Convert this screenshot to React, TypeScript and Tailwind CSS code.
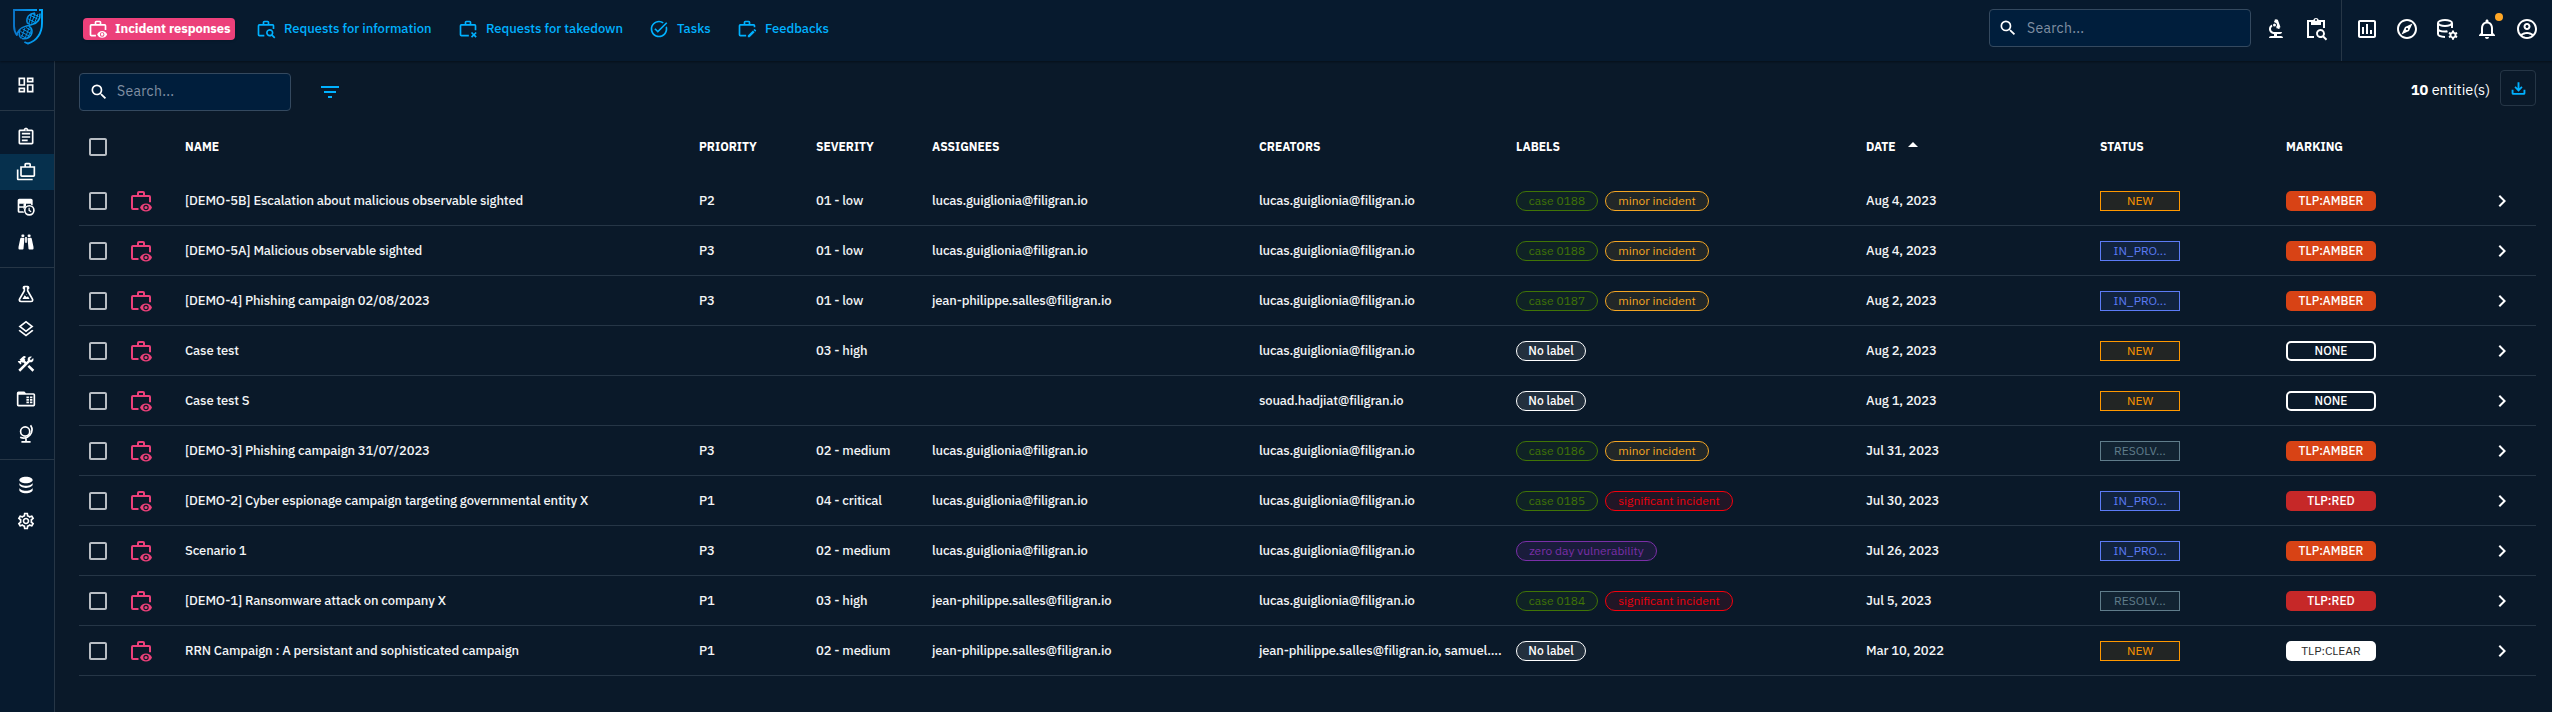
import React from "react";
import { MdOutlineDashboard, MdOutlineAssignment, MdOutlineCases, MdOutlineLayers, MdConstruction, MdOutlineExplore, MdOutlineAccountCircle, MdNotificationsNone, MdOutlineInsertChart, MdTaskAlt, MdSearch, MdFilterList, MdBiotech, MdChevronRight, MdOutlineCheckBoxOutlineBlank, MdArrowDropUp, MdOutlineSettings } from "react-icons/md";

type IP = { className?: string };

const Svg = ({ className = "", children }: { className?: string; children: React.ReactNode }) => (
  <svg viewBox="0 0 24 24" fill="currentColor" className={"shrink-0 " + className}>{children}</svg>
);

const CASE = "M8 6V4a2 2 0 0 1 2-2h4a2 2 0 0 1 2 2v2h4a2 2 0 0 1 2 2v5.200h-2V8H4v11h5.500v2H4a2 2 0 0 1-2-2V8a2 2 0 0 1 2-2h4Zm2 0h4V4h-4v2Z";

const CaseEye = ({ className }: IP) => (
  <Svg className={className}>
    <path d={CASE} />
    <path fillRule="evenodd" d="M17 14.500c-2.700 0-5 1.600-6 4 1 2.400 3.300 4 6 4s5-1.600 6-4c-1-2.400-3.300-4-6-4Zm0 6.700a2.700 2.700 0 1 1 0-5.400 2.700 2.700 0 0 1 0 5.400Zm0-1.100a1.600 1.600 0 1 0 0-3.200 1.600 1.600 0 0 0 0 3.200Z" />
  </Svg>
);
const CaseSearch = ({ className }: IP) => (
  <Svg className={className}>
    <path d="M8 6V4a2 2 0 0 1 2-2h4a2 2 0 0 1 2 2v2h4a2 2 0 0 1 2 2v4h-2V8H4v11h6v2H4a2 2 0 0 1-2-2V8a2 2 0 0 1 2-2h4Zm2 0h4V4h-4v2Z" />
    <path fillRule="evenodd" d="M16.500 12a4.500 4.500 0 1 0 2.300 8.400l3 3 1.400-1.400-3-3A4.500 4.500 0 0 0 16.500 12Zm0 2a2.500 2.500 0 1 1 0 5 2.500 2.500 0 0 1 0-5Z" />
  </Svg>
);
const CaseRemove = ({ className }: IP) => (
  <Svg className={className}>
    <path d="M8 6V4a2 2 0 0 1 2-2h4a2 2 0 0 1 2 2v2h4a2 2 0 0 1 2 2v5.500h-2V8H4v11h9v2H4a2 2 0 0 1-2-2V8a2 2 0 0 1 2-2h4Zm2 0h4V4h-4v2Z" />
    <path d="m21.100 15.500 1.400 1.400-2.100 2.100 2.100 2.100-1.400 1.400-2.100-2.100-2.100 2.100-1.400-1.400 2.100-2.100-2.100-2.100 1.400-1.400 2.100 2.100 2.100-2.100Z" />
  </Svg>
);
const CaseEdit = ({ className }: IP) => (
  <Svg className={className}>
    <path d="M8 6V4a2 2 0 0 1 2-2h4a2 2 0 0 1 2 2v2h4a2 2 0 0 1 2 2v2h-2V8H4v11h7v2H4a2 2 0 0 1-2-2V8a2 2 0 0 1 2-2h4Zm2 0h4V4h-4v2Z" />
    <path d="M13 19.900V22h2.100l6.100-6.100-2.100-2.100-6.100 6.100Zm9.900-6.300-1.400-1.400a.6.6 0 0 0-.8 0l-1 1 2.100 2.100 1-1a.6.6 0 0 0 .1-.7Z" />
  </Svg>
);
const ClipSearch = ({ className }: IP) => (
  <Svg className={className}>
    <path fillRule="evenodd" d="M3 3h6.200a3 3 0 0 1 5.600 0H21v8h-2V5h-2v3H7V5H5v14h5v2H3V3Zm9-1a1 1 0 1 0 0 2 1 1 0 0 0 0-2Z" />
    <path fillRule="evenodd" d="M16.500 12a4.500 4.500 0 1 0 2.300 8.400l3 3 1.400-1.400-3-3A4.500 4.500 0 0 0 16.500 12Zm0 2a2.500 2.500 0 1 1 0 5 2.500 2.500 0 0 1 0-5Z" />
  </Svg>
);
const GEAR = "M17.100 12h1.800l.3 1.500 1 .5 1.400-.6.900 1.600-1.100 1v1l1.100 1-.9 1.600-1.400-.5-1 .6-.3 1.500h-1.800l-.3-1.500-1-.6-1.400.5-.9-1.600 1.100-1v-1l-1.100-1 .9-1.600 1.400.6 1-.5.3-1.500Z";
const DbCog = ({ className }: IP) => (
  <Svg className={className}>
    <g fill="none" stroke="currentColor" strokeWidth="2">
      <ellipse cx="10" cy="6" rx="7" ry="3" />
      <path d="M3 6v11c0 1.500 2.500 2.800 7 3M17 6v5M3 11.500c0 1.700 3 3 7 3 1 0 2 0 2.500-.2" />
    </g>
    <path fillRule="evenodd" transform="translate(0 1.500)" d={GEAR + "M18 15a1.600 1.600 0 1 0 0 3.200 1.600 1.600 0 0 0 0-3.200Z"} />
  </Svg>
);
const TableClock = ({ className }: IP) => (
  <Svg className={className}>
    <path fillRule="evenodd" d="M4 2h14a2 2 0 0 1 2 2v6.300a7 7 0 0 0-2-1V8h-6v3a7 7 0 0 0-2 2H4v4h5a7 7 0 0 0 .7 2H4a2 2 0 0 1-2-2V4a2 2 0 0 1 2-2Zm0 6v3h6V8H4Z" />
    <path d="M9 8h2v4l-2 3z" />
    <path fillRule="evenodd" d="M16 9.500a6.500 6.500 0 1 0 0 13 6.500 6.500 0 0 0 0-13Zm0 2a4.500 4.500 0 1 1 0 9 4.500 4.500 0 0 1 0-9Zm-1 1.500v3.500l2.800 1.700.8-1.200-2.100-1.300V13H15Z" />
  </Svg>
);
const Binoculars = ({ className }: IP) => (
  <Svg className={className}>
    <path d="M11 6h2v7h-2zM9 20c0 .6-.4 1-1 1H4c-.6 0-1-.4-1-1v-2l2.100-10c.2-.7.500-1 1-1h3c.6 0 1 .4 1 1L9 20ZM10 5c0 .6-.4 1-1 1H7.500c-.6 0-1-.4-1-1V4c0-.6.400-1 1-1H9c.6 0 1 .4 1 1v1Zm5 15c0 .6.400 1 1 1h4c.6 0 1-.4 1-1v-2L18.900 8c-.2-.7-.500-1-1-1h-3c-.6 0-1 .4-1 1L15 20ZM14 5c0 .6.400 1 1 1h1.500c.6 0 1-.4 1-1V4c0-.6-.400-1-1-1H15c-.6 0-1 .4-1 1v1Z" />
  </Svg>
);
const Flask = ({ className }: IP) => (
  <Svg className={className}>
    <path d="M5 19a1 1 0 0 0 1 1h12a1 1 0 0 0 .860-1.490L13 8.350V4h-2v4.350L5.140 18.490c-.090.150-.140.320-.140.510m1 3a3 3 0 0 1-3-3c0-.6.180-1.160.5-1.630L9 7.810V6a1 1 0 0 1-1-1V4a2 2 0 0 1 2-2h4a2 2 0 0 1 2 2v1a1 1 0 0 1-1 1v1.810l5.500 9.560c.320.470.5 1.030.5 1.630a3 3 0 0 1-3 3H6m7-6 1.340-1.340L16.270 18H7.730l2.660-4.610L13 16m-.5-4a.5.5 0 1 1 0 1 .5.5 0 0 1 0-1Z" />
  </Svg>
);
const FolderTable = ({ className }: IP) => (
  <Svg className={className}>
    <path fillRule="evenodd" d="M3 3h7l2 2h9a2 2 0 0 1 2 2v12a2 2 0 0 1-2 2H3a2 2 0 0 1-2-2V5a2 2 0 0 1 2-2Zm0 4v12h18V7H3Z" />
    <path d="M12.500 9h3v2.200h-3zm4.200 0h3v2.200h-3zM12.500 12h3v2.200h-3zm4.200 0h3v2.200h-3zM12.500 15h3v2.200h-3zm4.200 0h3v2.200h-3z" />
  </Svg>
);
const Globe = ({ className }: IP) => (
  <Svg className={className}>
    <g fill="none" stroke="currentColor" strokeWidth="2">
      <circle cx="11" cy="9" r="5.500" />
      <path d="M17.500 1.500a10 10 0 0 1-12.500 14.500M12 17.500V21M6.500 21.500h11" />
    </g>
  </Svg>
);
const Database = ({ className }: IP) => (
  <Svg className={className}>
    <path d="M12 2C7.580 2 4 3.790 4 6s3.580 4 8 4 8-1.790 8-4-3.580-4-8-4M4 9v2.500c0 2.210 3.580 4 8 4s8-1.790 8-4V9c0 2.210-3.580 4-8 4s-8-1.790-8-4m0 6v3c0 2.210 3.580 4 8 4s8-1.790 8-4v-3c0 2.210-3.580 4-8 4s-8-1.790-8-4Z" />
  </Svg>
);
const Download = ({ className }: IP) => (
  <Svg className={className}>
    <path d="M1 14h3v5h16v-5h3v5.500a2.500 2.500 0 0 1-2.500 2.500h-17A2.500 2.500 0 0 1 1 19.500V14Zm11 3 6.500-6.500-2-2-3 3V2h-3v9.500l-3-3-2 2L12 17Z" />
  </Svg>
);

const Shield = () => (
  <svg viewBox="0 0 30 36" className="h-9 w-[30px]" fill="none">
    <defs>
      <linearGradient id="g" x1="0" y1="0" x2="30" y2="0" gradientUnits="userSpaceOnUse"><stop stopColor="#0b75c9" /><stop offset="1" stopColor="#00aaff" /></linearGradient>
    </defs>
    <g stroke="url(#g)">
      <path d="M24 1H1v16c0 4 1.200 7 3.200 9.500M26 1h3v13c0 10-5 18-14 20.500-1.200-.4-2.500-.9-3.600-1.500" strokeWidth="1.900" />
      <path d="M27 4.500c.500 6-2 9.500-8 11-4 1-8 1.800-10.500 3.500-3 2-4.500 4.500-4.500 7.500M14 13.500c-.8-5.500 2-9 8-9.500M14 13.500c.8 1.200 1.500 1.500 3 1.800M9 29.500c5 1 9.500-1.500 10-6.500.2-2.500-1-4.500-3-5.500M7 20.500c-1.500 4-1 7 1.500 9" strokeWidth="1.500" />
      <path d="M16.500 6l8 4M14.500 9.500l7.500 4M19 4.500l6.500 3M18.500 5l-2.500 9M22 4.500l-3.500 10M25 5l-3 8M9.500 20l8.500 4.500M7.500 22.500l9.500 5M7.500 26l6 3.500M13 18.500l5.500 3M12 19l-3.500 9.500M16 19l-4 10.500M18 22l-3 6" strokeWidth="1" />
    </g>
  </svg>
);

const tabs = [
  { label: "Requests for information", Icon: CaseSearch, cls: "w-[202px]" },
  { label: "Requests for takedown", Icon: CaseRemove, cls: "w-[191px]" },
  { label: "Tasks", Icon: MdTaskAlt, cls: "w-[88px]" },
  { label: "Feedbacks", Icon: CaseEdit, cls: "w-[120px]" },
];

const side = [
  [MdOutlineDashboard],
  [MdOutlineAssignment, MdOutlineCases, TableClock, Binoculars],
  [Flask, MdOutlineLayers, MdConstruction, FolderTable, Globe],
  [Database, MdOutlineSettings],
];

const LG = "lucas.guiglionia@filigran.io";
const JP = "jean-philippe.salles@filigran.io";
type Row = [string, string, string, string, string, string[], string, string, string];
const rows: Row[] = [
  ["[DEMO-5B] Escalation about malicious observable sighted", "P2", "01 - low", LG, LG, ["case 0188", "minor incident"], "Aug 4, 2023", "NEW", "TLP:AMBER"],
  ["[DEMO-5A] Malicious observable sighted", "P3", "01 - low", LG, LG, ["case 0188", "minor incident"], "Aug 4, 2023", "IN_PRO...", "TLP:AMBER"],
  ["[DEMO-4] Phishing campaign 02/08/2023", "P3", "01 - low", JP, LG, ["case 0187", "minor incident"], "Aug 2, 2023", "IN_PRO...", "TLP:AMBER"],
  ["Case test", "", "03 - high", "", LG, ["No label"], "Aug 2, 2023", "NEW", "NONE"],
  ["Case test S", "", "", "", "souad.hadjiat@filigran.io", ["No label"], "Aug 1, 2023", "NEW", "NONE"],
  ["[DEMO-3] Phishing campaign 31/07/2023", "P3", "02 - medium", LG, LG, ["case 0186", "minor incident"], "Jul 31, 2023", "RESOLV...", "TLP:AMBER"],
  ["[DEMO-2] Cyber espionage campaign targeting governmental entity X", "P1", "04 - critical", LG, LG, ["case 0185", "significant incident"], "Jul 30, 2023", "IN_PRO...", "TLP:RED"],
  ["Scenario 1", "P3", "02 - medium", LG, LG, ["zero day vulnerability"], "Jul 26, 2023", "IN_PRO...", "TLP:AMBER"],
  ["[DEMO-1] Ransomware attack on company X", "P1", "03 - high", JP, LG, ["case 0184", "significant incident"], "Jul 5, 2023", "RESOLV...", "TLP:RED"],
  ["RRN Campaign : A persistant and sophisticated campaign", "P1", "02 - medium", JP, "jean-philippe.salles@filigran.io, samuel....", ["No label"], "Mar 10, 2022", "NEW", "TLP:CLEAR"],
];

const labelStyle = (l: string) =>
  l.startsWith("case") ? "w-[82px] border-[#417505] text-[#417505] bg-[#417505]/10"
  : l.startsWith("minor") ? "w-[104px] border-[#f5a623] text-[#f5a623] bg-[#f5a623]/10"
  : l.startsWith("sig") ? "w-[128px] border-[#f5000c] text-[#f0000c] bg-[#f5000c]/10"
  : l.startsWith("zero") ? "w-[141px] border-[#7b2fa8] text-[#7b2fa8] bg-[#7b2fa8]/15"
  : "w-[70px] border-white text-white bg-white/10 font-medium";
const statusStyle = (s: string) =>
  s === "NEW" ? "border-[#ff9800] text-[#ff9800] bg-[#ff9800]/10"
  : s === "IN_PRO..." ? "border-[#5c7bf5] text-[#5c7bf5] bg-[#5c7bf5]/10"
  : "border-[#607d8b] text-[#607d8b] bg-[#607d8b]/10";
const markStyle = (m: string) =>
  m === "TLP:AMBER" ? "bg-[#d84315] text-white font-medium"
  : m === "TLP:RED" ? "bg-[#c62828] text-white font-medium"
  : m === "NONE" ? "border-2 border-white text-white font-medium"
  : "bg-white text-[#2b2b2b]";

const GRID = "grid grid-cols-[42px_56px_514px_117px_116px_327px_257px_350px_234px_186px_204px_1fr] items-center";

const Check = () => <MdOutlineCheckBoxOutlineBlank className="-ml-px size-6 text-[#b8bdc3]" />;

export default function App() {
  return (
    <div className="flex h-[712px] w-[2552px] flex-col overflow-hidden bg-[#0a1929] font-['IBM_Plex_Sans',Roboto,sans-serif] text-[13px] text-white">
      <header className="relative z-10 flex h-[61px] shrink-0 items-center bg-[#071a2e] shadow-[0_1px_2px_rgba(0,0,0,0.4)]">
        <div className="flex w-[83px] pb-[7px] pl-[13px]"><Shield /></div>
        <div className="mb-[3px] flex h-[22px] w-[152px] items-center gap-[7px] rounded bg-[#ec407a] pl-[5px] text-[13px] font-bold shadow">
          <CaseEye className="size-5" />
          <span className="tracking-[-0.1px] whitespace-nowrap">Incident responses</span>
        </div>
        <nav className="mb-[3px] ml-[21px] flex items-center text-[13px] font-medium text-[#00b1ff]">
          {tabs.map(({ label, Icon, cls }) => (
            <div key={label} className={"flex items-center gap-2 whitespace-nowrap " + cls}>
              <Icon className="size-5 shrink-0" />
              <span>{label}</span>
            </div>
          ))}
        </nav>
        <div className="mb-[5px] ml-auto flex h-[38px] w-[262px] items-center rounded border border-[#34495f] bg-[#001e3c] pl-2">
          <MdSearch className="size-5" />
          <span className="ml-[9px] text-[14px] tracking-[0.3px] text-[#8090a3]">Search...</span>
        </div>
        <div className="flex w-[90px] shrink-0 items-center gap-4 pb-[3px] pl-[13px]">
          <MdBiotech className="size-6 shrink-0" />
          <ClipSearch className="size-6" />
        </div>
        <div className="h-full w-px bg-[#263646]" />
        <div className="flex w-[210px] shrink-0 items-center gap-4 pb-[3px] pl-[13px] [&_svg]:size-6 [&>*]:shrink-0">
          <MdOutlineInsertChart />
          <MdOutlineExplore />
          <DbCog />
          <div className="relative">
            <MdNotificationsNone />
            <span className="absolute -top-1 -right-[4px] size-[8px] rounded-full bg-[#ffa726]" />
          </div>
          <MdOutlineAccountCircle />
        </div>
      </header>
      <div className="flex min-h-0 flex-1">
        <aside className="flex w-[55px] shrink-0 flex-col border-r border-[#263646] bg-[#071a2e]">
          {side.map((g, i) => (
            <div key={i} className={i === 0 ? "border-b border-[#263646] pt-[6px] pb-2" : i === 3 ? "pt-2" : "border-b border-[#263646] pt-2 pb-[7px]"}>
              {g.map((Icon, j) => (
                <div key={j} className={"flex h-[35.2px] items-center justify-center pr-0.5 " + (i === 1 && j === 1 ? "bg-[#06304d]" : "")}>
                  <Icon className="size-5" />
                </div>
              ))}
            </div>
          ))}
        </aside>
        <main className="min-w-0 flex-1 pr-4 pl-6">
          <div className="flex h-[61px] items-center">
            <div className="flex h-[38px] w-[212px] items-center rounded border border-[#34495f] bg-[#001e3c] pl-[9px]">
              <MdSearch className="size-5" />
              <span className="ml-2 text-[14px] tracking-[0.3px] text-[#8090a3]">Search...</span>
            </div>
            <MdFilterList className="ml-[27px] size-6 text-[#00b1ff]" />
            <div className="mb-[3px] ml-auto text-[14.5px]"><b>10</b> entitie(s)</div>
            <div className="mb-[7px] ml-[10px] flex h-9 w-9 items-center justify-center rounded border border-[#263646] text-[#00b1ff]"><Download className="size-[15px]" /></div>
          </div>
          <div className={GRID + " h-[54px] pb-1 pl-2 text-[12px] font-bold"}>
            <Check /><span />
            <span>NAME</span><span>PRIORITY</span><span>SEVERITY</span><span>ASSIGNEES</span><span>CREATORS</span><span>LABELS</span>
            <span className="flex items-center gap-[5px]">DATE <MdArrowDropUp className="-mt-1 size-6" /></span>
            <span>STATUS</span><span>MARKING</span>
          </div>
          {rows.map((r) => (
            <div key={r[0]} className={GRID + " h-[50px] border-b border-[#263646] pl-2 font-medium tracking-[-0.13px] whitespace-nowrap text-[#f2f4f6]"}>
              <Check />
              <CaseEye className="size-6 text-[#ec407a]" />
              <span>{r[0]}</span><span>{r[1]}</span><span>{r[2]}</span>
              <span className="tracking-[-0.17px]">{r[3]}</span><span className="tracking-[-0.17px]">{r[4]}</span>
              <div className="flex gap-[7px] text-[12px] font-normal tracking-normal">
                {r[5].map((l) => (
                  <span key={l} className={"flex h-5 items-center justify-center rounded-full border " + labelStyle(l)}>{l}</span>
                ))}
              </div>
              <span>{r[6]}</span>
              <span className={"flex h-5 w-20 items-center justify-center border text-[12px] font-normal tracking-normal " + statusStyle(r[7])}>{r[7]}</span>
              <span className={"flex h-5 w-[90px] items-center justify-center rounded-[5px] text-[12px] tracking-normal " + (r[8] === "TLP:CLEAR" ? "font-normal " : "") + markStyle(r[8])}>{r[8]}</span>
              <MdChevronRight className="size-6 text-white" />
            </div>
          ))}
        </main>
      </div>
    </div>
  );
}
